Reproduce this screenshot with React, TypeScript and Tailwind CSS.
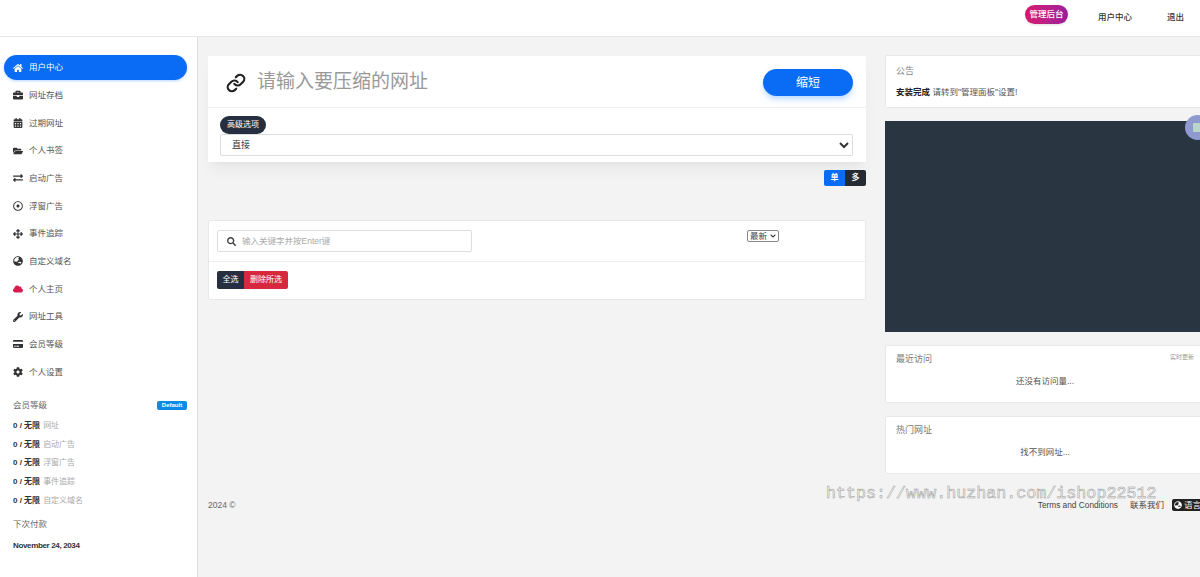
import React from 'react';
import {
  FaHome, FaBriefcase, FaCalendarAlt, FaFolderOpen, FaExchangeAlt, FaRegDotCircle,
  FaArrowsAlt, FaGlobeAsia, FaCloud, FaWrench, FaCreditCard, FaCog, FaSearch, FaChevronDown,
} from 'react-icons/fa';
import { Link } from 'lucide-react';

const cjk = "font-['Liberation_Sans','Noto_Sans_CJK_SC',sans-serif]";

const MENU = [
  { label: '用户中心', icon: FaHome, active: true },
  { label: '网址存档', icon: FaBriefcase },
  { label: '过期网址', icon: FaCalendarAlt },
  { label: '个人书签', icon: FaFolderOpen },
  { label: '启动广告', icon: FaExchangeAlt },
  { label: '浮窗广告', icon: FaRegDotCircle },
  { label: '事件追踪', icon: FaArrowsAlt },
  { label: '自定义域名', icon: FaGlobeAsia },
  { label: '个人主页', icon: FaCloud, red: true },
  { label: '网址工具', icon: FaWrench },
  { label: '会员等级', icon: FaCreditCard },
  { label: '个人设置', icon: FaCog },
];

const LIMITS = ['网址', '启动广告', '浮窗广告', '事件追踪', '自定义域名'];

const Sidebar: React.FC = () => (
  <aside className="w-[198px] shrink-0 bg-white border-r border-[#dedede] pt-[18px] pl-1 pr-[10px]">
    <nav className="flex flex-col gap-[2.7px]">
      {MENU.map((item) => {
        const Icon = item.icon;
        return (
          <div
            key={item.label}
            className={`flex items-center h-[25px] pl-[9px] rounded-full text-[8.5px] ${
              item.active ? 'bg-[#0a6cf5] text-white shadow-sm shadow-blue-200' : 'text-[#555]'
            }`}
          >
            <span className="w-4 shrink-0">
              <Icon className={`text-[10px] ${item.active ? 'text-white' : item.red ? 'text-[#d81b4f]' : 'text-[#333]'}`} />
            </span>
            {item.label}
          </div>
        );
      })}
    </nav>

    <div className="mt-[15px] pl-[9px]">
      <div className="flex items-center justify-between h-[12px] text-[8.5px] text-[#666]">
        <span>会员等级</span>
        <span className="w-[30px] h-[9px] leading-[9px] rounded-[2px] bg-[#0d8ae6] text-white text-[6px] font-bold text-center">Default</span>
      </div>
      <div className="mt-[5px] flex flex-col">
        {LIMITS.map((name) => (
          <div key={name} className="h-[18.7px] flex items-center gap-[3px] text-[8px]">
            <b className="text-[#333]">0 / 无限</b>
            <span className="text-[#aaa]">{name}</span>
          </div>
        ))}
      </div>
      <div className="mt-[8px] text-[8.5px] text-[#666]">下次付款</div>
      <div className="mt-[9px] text-[8px] font-bold tracking-[-0.35px] text-[#333]">November 24, 2034</div>
    </div>
  </aside>
);

const Card: React.FC<{ title: string; hint?: string; children: React.ReactNode }> = ({ title, hint, children }) => (
  <div className="h-[58px] bg-white border border-[#e8e8e8] rounded-[2px] px-[10px] pt-[7px]">
    <div className="flex justify-between">
      <span className="text-[9px] text-[#777]">{title}</span>
      {hint && <span className="text-[6px] text-[#999]">{hint}</span>}
    </div>
    <div className="mt-[8px] text-center text-[8.5px] text-[#555]">{children}</div>
  </div>
);

export default function App() {
  return (
    <div className={`relative w-[1200px] h-[577px] overflow-hidden flex flex-col bg-[#f3f3f3] ${cjk}`}>
      <header className="h-[37px] shrink-0 bg-white border-b border-[#e6e6e6] flex items-center justify-end text-[8.5px] text-[#333] font-medium">
        <span className="w-[43px] h-[19px] -mt-[7px] leading-[19px] text-center rounded-full bg-gradient-to-r from-[#d9156a] to-[#9c1a9e] text-white shadow-sm">管理后台</span>
        <span className="ml-[30px] -mt-[1px]">用户中心</span>
        <span className="ml-[35px] mr-[16px] -mt-[1px]">退出</span>
      </header>

      <div className="flex-1 flex min-h-0">
        <Sidebar />

        <main className="flex-1 min-w-0 pl-[10px] pt-[18px]">
          <div className="flex gap-[19px] w-[997px]">
            <div className="w-[658px] shrink-0 pt-[1px]">
              <div className="h-[106px] bg-white shadow-lg shadow-black/5">
                <div className="h-[52px] flex items-center pt-[2px] pl-[18px] pr-[13px] border-b border-[#f0f0f0]">
                  <Link size={20} strokeWidth={2.6} className="text-[#222] shrink-0" />
                  <input
                    className="flex-1 ml-[11px] text-[19px] outline-none placeholder:text-[#999]"
                    placeholder="请输入要压缩的网址"
                  />
                  <button className="w-[90px] h-[27px] rounded-full bg-[#0a6cf5] text-white text-[12px] shadow-md shadow-blue-200">缩短</button>
                </div>
                <div className="px-[12px] pr-[13px]">
                  <span className="block w-[46px] h-[18px] mt-[8px] leading-[18px] text-center rounded-full bg-[#252f3f] text-white text-[8px]">高级选项</span>
                  <select className="block w-full h-[22px] bg-white border border-[#ddd] rounded-[2px] pl-[7px] text-[9px] text-[#333] outline-none">
                    <option>直接</option>
                  </select>
                </div>
              </div>

              <div className="flex justify-end mt-[8px]">
                <span className="w-[21px] h-[16px] leading-[16px] text-center bg-[#0a6cf5] text-white text-[8px] font-bold rounded-l-[2px]">单</span>
                <span className="w-[21px] h-[16px] leading-[16px] text-center bg-[#252a33] text-white text-[8px] font-bold rounded-r-[2px]">多</span>
              </div>

              <div className="mt-[34px] h-[80px] bg-white border border-[#e8e8e8] rounded-[2px]">
                <div className="h-[41px] flex items-start pt-[9px] pl-[8px] border-b border-[#eee]">
                  <div className="w-[255px] h-[22px] flex items-center border border-[#ddd] rounded-[2px] pl-[9px]">
                    <FaSearch className="text-[9px] text-[#444] shrink-0" />
                    <input
                      className="flex-1 ml-[6px] text-[8.5px] outline-none placeholder:text-[#aaa]"
                      placeholder="输入关键字并按Enter键"
                    />
                  </div>
                  <div className="ml-[275px] w-[32px] h-[12px] flex items-center justify-between px-[2px] bg-white border border-[#888] rounded-[2px] text-[8.5px] text-[#444]">
                    最新
                    <FaChevronDown className="text-[6px] text-[#222]" />
                  </div>
                </div>
                <div className="flex pt-[9px] pl-[8px] text-white text-[8px]">
                  <span className="w-[27px] h-[18px] leading-[18px] text-center bg-[#252f3f] rounded-l-[2px]">全选</span>
                  <span className="w-[44px] h-[18px] leading-[18px] text-center bg-[#d6293e] rounded-r-[2px]">删除所选</span>
                </div>
              </div>
            </div>

            <div className="w-[320px] shrink-0">
              <div className="h-[53px] bg-white border border-[#e8e8e8] rounded-[2px] px-[10px] pt-[9px]">
                <div className="text-[9px] text-[#888]">公告</div>
                <div className="mt-[7px] text-[8.5px] text-[#555]">
                  <b className="text-[#222]">安装完成</b> 请转到"管理面板"设置!
                </div>
              </div>

              <div className="relative mt-[13px] h-[211px] bg-[#2a3542]">
                <div className="absolute -top-[6px] -right-[5px] w-[25px] h-[25px] rounded-full bg-[#8f9bd0] flex items-center justify-center">
                  <span className="w-[9px] h-[9px] bg-[#b9d6c8] rounded-[1px]" />
                </div>
              </div>

              <div className="mt-[13px]">
                <Card title="最近访问" hint="实时更新">还没有访问量...</Card>
              </div>
              <div className="mt-[13px]">
                <Card title="热门网址">找不到网址...</Card>
              </div>
            </div>
          </div>

          <footer className="w-[997px] mt-[25px] h-[12px] flex items-center text-[8.5px] text-[#666]">
            <span>2024 ©</span>
            <span className="ml-auto text-[8.3px] text-[#444]">Terms and Conditions</span>
            <span className="ml-[12px] text-[#444]">联系我们</span>
            <span className="ml-[8px] w-[33px] h-[12px] flex items-center pl-[2px] gap-[2px] bg-[#222] text-white rounded-[2px]">
              <FaGlobeAsia className="text-[8px]" />语言
            </span>
          </footer>
        </main>
      </div>

      <div className="absolute left-[826px] top-[481px] font-['Liberation_Mono',monospace] text-[16.7px] text-transparent [-webkit-text-stroke:0.5px_#999] whitespace-nowrap">
        https://www.huzhan.com/ishop22512
      </div>
    </div>
  );
}
